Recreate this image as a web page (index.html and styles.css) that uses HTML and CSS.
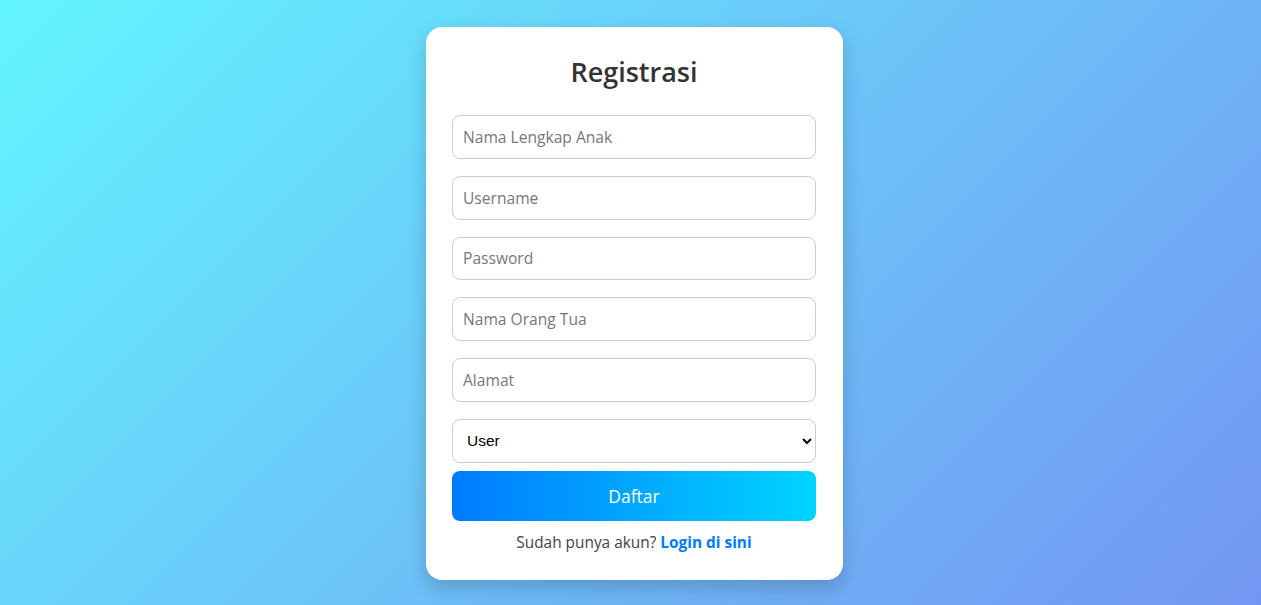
FILE: index.html
```html
<!DOCTYPE html>
<html lang="id">
<head>
<meta charset="utf-8">
<title>Registrasi</title>
<link rel="stylesheet" href="styles.css">
</head>
<body>
<main class="page">
  <section class="card">
    <h2 class="title">Registrasi</h2>
    <form class="form">
      <input class="field" type="text" placeholder="Nama Lengkap Anak">
      <input class="field" type="text" placeholder="Username">
      <input class="field" type="password" placeholder="Password">
      <input class="field" type="text" placeholder="Nama Orang Tua">
      <input class="field" type="text" placeholder="Alamat">
      <select class="field select">
        <option>User</option>
        <option>Admin</option>
      </select>
      <button class="btn" type="button">Daftar</button>
    </form>
    <p class="foot">Sudah punya akun? <a class="link" href="#">Login di sini</a></p>
  </section>
</main>
</body>
</html>
```
FILE: styles.css
```css
* { box-sizing: border-box; }
html, body { margin: 0; height: 100%; }
body {
  font-family: "Open Sans", "Liberation Sans", sans-serif;
  background: linear-gradient(135deg, #62f5ff 0%, #6cc4f8 50%, #7396f2 100%);
  overflow: hidden;
}
.page {
  display: flex;
  justify-content: center;
  padding: 27px 0 0 8px;
}
.card {
  width: 417px;
  background: #fff;
  border-radius: 16px;
  padding: 27px 27px 26px 26px;
  box-shadow: 0 8px 20px rgba(0, 0, 0, 0.18);
}
.title {
  margin: 0 0 25px;
  text-align: center;
  font-size: 27px;
  line-height: 36px;
  font-weight: 600;
  color: #333;
}
.form {
  display: flex;
  flex-direction: column;
}
.field {
  width: 100%;
  height: 43.8px;
  margin: 0 0 17px;
  padding: 0 10px;
  border: 1px solid #ccc;
  border-radius: 8px;
  font-family: inherit;
  font-size: 15.6px;
  color: #333;
  background: #fff;
  outline: none;
}
.field::placeholder { color: #777; }
.select {
  margin-bottom: 8.2px;
  padding-left: 10px;
  font-family: "Liberation Sans", Arial, sans-serif;
  font-size: 15.5px;
  color: #000;
}
.btn {
  height: 50px;
  border: none;
  border-radius: 8px;
  background: linear-gradient(90deg, #007bff, #00d4ff);
  color: #fff;
  font-family: inherit;
  font-size: 17.5px;
}
.foot {
  margin: 11px 0 0;
  text-align: center;
  font-size: 15.4px;
  line-height: 22px;
  color: #444;
}
.link {
  color: #007bff;
  font-weight: 700;
  text-decoration: none;
}
```
